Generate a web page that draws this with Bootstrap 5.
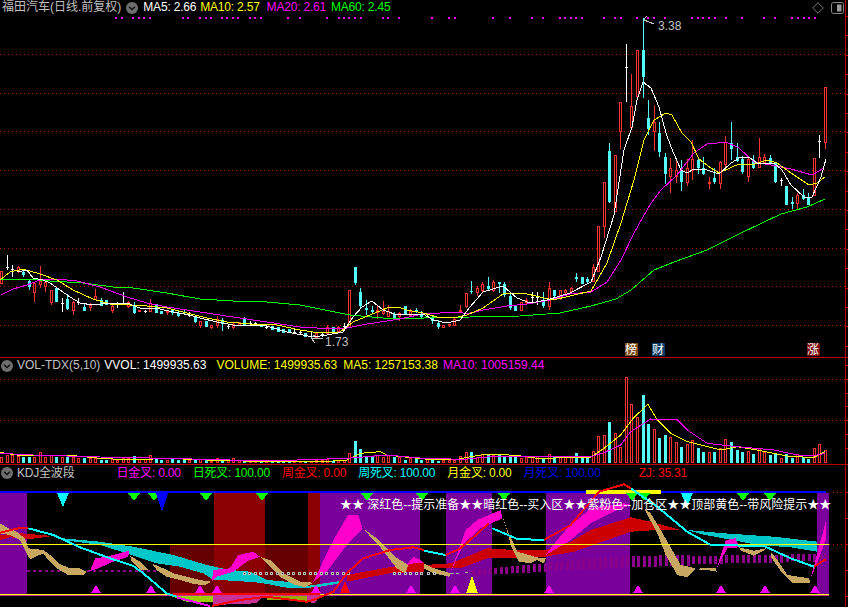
<!DOCTYPE html>
<html lang="zh">
<head>
<meta charset="utf-8">
<title>福田汽车</title>
<link href="https://cdn.jsdelivr.net/npm/bootstrap@5.3.0/dist/css/bootstrap.min.css" rel="stylesheet">
<style>
html,body{margin:0;height:100%;background:#000;overflow:hidden}
.term{width:848px;height:607px;background:#000;font:12px/15px "Liberation Sans","Noto Sans CJK SC",sans-serif}
.stack{width:845px}
.axis{width:3px;border-left:1px solid #c00000}
.axis svg{display:block}
.pane-a{height:358px;border-bottom:1px solid #c00000}
.pane-b{height:107px;border-bottom:1px solid #c00000}
.pane-c{height:142px}
.legend{height:15px;white-space:nowrap;padding-left:1px;letter-spacing:-.2px}
.pane-a .legend{padding-left:2px}
.pane-a .legend>span:first-child{letter-spacing:0}
.pane-b .legend{letter-spacing:0}
.pane-c .legend{height:16px}
.legend svg,.plot{display:block;flex:none}
.c-g{color:#c0c0c0}.c-w{color:#fff}.c-y{color:#ff0}.c-m{color:#f0f}.c-l{color:#0f0}.c-r{color:#f00}.c-c{color:#0ff}.c-b{color:#0000e6}
.gap-4{margin-left:4px}.gap-5{margin-left:5px}.gap-6{margin-left:6px}.gap-7{margin-left:7px}
.gap-10{margin-left:10px}.gap-12{margin-left:12px}
.gap-38{margin-left:38px}.gap-42{margin-left:42px}
.plot text{font:12px "Liberation Sans","Noto Sans CJK SC",sans-serif}
.plot{shape-rendering:crispEdges}
.tool{gap:7px;margin-right:1px}
</style>
</head>
<body>
<div class="term d-flex flex-row overflow-hidden">
  <div class="stack d-flex flex-column">
    <section class="pane-a d-flex flex-column">
      <div class="legend d-flex align-items-center">
        <span class="c-g">福田汽车(日线.前复权)</span>
        <svg class="gap-5" width="12" height="12" viewBox="0 0 12 12"><circle cx="6" cy="6" r="6" fill="#6e6e6e"/><path d="M3 4.8 6 7.6 9 4.8" fill="none" stroke="#111" stroke-width="1.4"/></svg>
        <span class="c-w gap-5">MA5: 2.66</span>
        <span class="c-y gap-4">MA10: 2.57</span>
        <span class="c-m gap-7">MA20: 2.61</span>
        <span class="c-l gap-5">MA60: 2.45</span>
        <span class="tool ms-auto d-flex align-items-center">
          <svg width="12" height="12" viewBox="0 0 12 12"><path d="M6 .7 11.3 6 6 11.3.7 6Z" fill="none" stroke="#777"/></svg>
          <svg width="13" height="12" viewBox="0 0 13 12"><rect x=".5" y=".5" width="12" height="11" rx="2" fill="none" stroke="#888"/><rect x="6" y="2.5" width="4.5" height="7" fill="#999"/></svg>
        </span>
      </div>
      <svg id="p1" class="plot" width="845" height="342" viewBox="0 15 845 342">
        <g id="p1g"></g>
        <g fill="#c0c0c0">
          <text x="658" y="30">3.38</text>
          <text x="325" y="346">1.73</text>
        </g>
        <path d="M644 20 654 24M644 19 647 16M644 19 647 22M311 338 323 339M311 338 315 335M311 338 315 343" stroke="#c0c0c0" fill="none"/>
        <rect x="625" y="343" width="13" height="13" fill="#7a4a18"/><text x="625" y="354" fill="#fff">榜</text>
        <rect x="652" y="343" width="13" height="13" fill="#0c3a66"/><text x="652" y="354" fill="#fff">财</text>
        <rect x="807" y="343" width="13" height="13" fill="#7a0c0c"/><text x="807" y="354" fill="#fff">涨</text>
      </svg>
    </section>
    <section class="pane-b d-flex flex-column">
      <div class="legend d-flex align-items-center">
        <svg width="12" height="12" viewBox="0 0 12 12"><circle cx="6" cy="6" r="6" fill="#6e6e6e"/><path d="M3 4.8 6 7.6 9 4.8" fill="none" stroke="#111" stroke-width="1.4"/></svg>
        <span class="c-g gap-4">VOL-TDX(5,10)</span>
        <span class="c-w gap-4">VVOL: 1499935.63</span>
        <span class="c-y gap-10">VOLUME: 1499935.63</span>
        <span class="c-y gap-6">MA5: 1257153.38</span>
        <span class="c-m gap-5">MA10: 1005159.44</span>
      </div>
      <svg id="p2" class="plot" width="845" height="91" viewBox="0 373 845 91"></svg>
    </section>
    <section class="pane-c d-flex flex-column">
      <div class="legend d-flex align-items-center">
        <svg width="12" height="12" viewBox="0 0 12 12"><circle cx="6" cy="6" r="6" fill="#6e6e6e"/><path d="M3 4.8 6 7.6 9 4.8" fill="none" stroke="#111" stroke-width="1.4"/></svg>
        <span class="c-g gap-4">KDJ全波段</span>
        <span class="c-m gap-42">日金叉: 0.00</span>
        <span class="c-l gap-12">日死叉: 100.00</span>
        <span class="c-r gap-12">周金叉: 0.00</span>
        <span class="c-c gap-12">周死叉: 100.00</span>
        <span class="c-y gap-12">月金叉: 0.00</span>
        <span class="c-b gap-12">月死叉: 100.00</span>
        <span class="c-r gap-38">ZJ: 35.31</span>
      </div>
      <svg id="p3" class="plot" width="845" height="126" viewBox="0 481 845 126"><g id="p3g"></g>
        <text x="340" y="509" fill="#fff" xml:space="preserve">★★ 深红色--提示准备★★暗红色--买入区★★紫粉色--加仓区★★顶部黄色--带风险提示★★</text>
      </svg>
    </section>
  </div>
  <div class="axis"><svg id="ax" width="2" height="607" viewBox="0 0 2 607"></svg></div>
</div>
<script>
/* Chart data in pixel units of each pane: [kind, bodyTop, bodyBottom, high, low] from newest to oldest */
var C=`r87,143,87,149 w135,158,141 r158,196,158,196 c197,205,193,205 c195,199,189,200 r195,204,193,209 c202,204,197,209 c186,205,186,205 w178,186,180 c163,182,163,183 c158,163,155,163 r157,163,154,163 r157,168,138,168 c160,168,155,169 r159,177,157,182 c159,172,156,174 c157,161,143,162 c143,149,122,160 r142,165,136,167 r162,184,161,189 c178,182,168,184 r182,184,177,189 c168,174,157,175 c160,168,157,174 r159,171,140,180 r168,183,159,186 c171,182,160,191 r170,177,158,183 r168,177,158,193 c157,174,153,184 c133,152,122,157 r122,132,105,151 c118,129,100,135 c50,77,18,98 r50,97,50,97 r106,128,74,128 w44,102,67 r102,132,102,149 r155,212,155,212 c151,202,143,203 r182,227,182,238 r226,272,226,272 r267,282,264,282 c279,282,277,284 c277,284,277,284 c277,279,273,282 r288,292,287,293 r290,293,289,295 r290,298,290,300 c290,296,290,298 r288,307,282,310 c300,306,292,308 w292,305,297 w292,302,297 r300,303,298,305 r302,311,302,311 c305,311,305,311 c296,308,293,310 c284,295,282,297 c282,284,282,293 r282,291,280,292 c286,289,277,290 r284,291,282,292 r288,293,286,296 c291,292,281,294 r293,307,293,308 r310,312,305,313 r319,326,317,326 r324,326,324,327 r325,328,325,328 c323,327,320,329 c318,321,316,324 w313,318,316 c314,317,311,319 c310,312,308,313 r311,316,309,317 c306,315,306,315 r313,317,312,321 c314,319,312,319 r311,317,305,317 r311,314,301,315 r310,313,305,319 c310,312,306,313 c308,310,300,315 c292,306,288,308 c267,283,267,285 r290,328,290,328 w323,329,326 r327,332,326,332 c327,333,327,333 r327,334,325,334 w332,337,334 r333,338,333,338 w332,338,336 c333,337,333,337 w330,335,332 w329,334,332 c329,333,329,333 c329,333,329,333 c327,332,327,332 c326,330,326,330 w325,329,327 c324,327,324,327 w322,325,323 w321,325,323 c318,325,317,325 r322,326,322,326 r324,328,323,329 w324,329,326 c320,324,318,331 r319,326,316,328 r325,328,325,329 c321,327,321,327 r321,326,321,328 c316,322,316,323 w312,317,315 c312,313,310,314 c313,316,311,317 c309,313,309,315 r311,313,310,315 c311,314,311,314 c304,313,304,313 r303,312,299,312 w310,313,311 r310,312,310,312 c305,313,302,314 r302,307,301,308 w292,305,303 w302,308,304 r306,311,305,313 c300,305,300,305 c300,306,298,306 r296,300,289,300 r305,308,303,311 c307,311,303,311 w298,305,302 r302,311,301,315 c299,309,294,310 w298,312,303 c288,302,288,302 r290,303,290,305 r282,287,281,292 r281,285,266,288 r283,293,282,302 c281,287,280,290 c272,275,269,277 r267,272,266,273 w265,277,269 w255,270,267 r271,284,271,284`.split(' ');
var VR=[330,312,323,356,352,342,353,343,355,340,345,335,323,342,333,337,330,305,297,325,335,337,335,323,300,312,320,305,290,285,293,268,252,165,230,192,112,320,280,245,285,288,333,352,352,338,352,352,352,347,342,355,349,352,352,353,346,347,347,346,345,342,342,350,337,337,348,360,360,360,362,358,358];
var VL=[307,300,300,303,307,305,305,292,305,300,305,307,307,307,308,310,310,310,314,314,313,315,310,310,303,312,312,300,308,315,316,311,315,316,316,316,313,315,317,310,312,313,310,314,314,316,316,318,318,318,318,318,318,316,318,320,318,316,316,313,318,316,316,295,258,282,305,306,300,305,300,305,305,316,310,312,315];
var STEP=5.53;
function h(y){return '<path d="M0 '+(y+.5)+'H845" stroke="#a80000" stroke-dasharray="1 3"/>'}
function poly(p,c,w){return '<polyline points="'+p+'" fill="none" stroke="'+c+'" stroke-width="'+(w||1)+'"/>'}
/* ------- main pane ------- */
var s='';[54,93,131,170,209,248,286,325].forEach(y=>s+=h(y));
var dots1=[348,365,400,417,433,450,550,565,600,617,632,665,682,698,715,750,765,782,865,900,982,1017,1032,1048,1065,1082,1148,1165,1197];
var dots2=[25,75,92,207,258,323,357,408,423,440,456,473,540,573,590,640,673,690,723,805,821,838,855,872,906,954,1020,1052,1104,1122,1140,1156,1172];
dots1.forEach(d=>s+='<rect x="'+Math.round(d/3-1)+'" y="17" width="2" height="2" fill="#f0f"/>');
dots2.forEach(d=>s+='<rect x="'+Math.round(424+d/3-1)+'" y="17" width="2" height="2" fill="#f0f"/>');
C.forEach(function(d,k){
  var t=d[0],v=d.slice(1).split(',').map(Number),x=Math.round(825-STEP*k),m=x+.5;
  if(t=='w'){s+='<path d="M'+m+' '+v[0]+'V'+v[1]+'M'+(x-1)+' '+(v[2]+.5)+'H'+(x+2)+'" stroke="#fff"/>';return}
  var col=t=='r'?'#ff3232':'#54fcfc';
  if(v[2]<v[0]||v[3]>v[1])s+='<path d="M'+m+' '+v[2]+'V'+v[0]+'M'+m+' '+v[1]+'V'+v[3]+'" stroke="'+col+'"/>';
  if(t=='r')s+='<rect x="'+(x-.5)+'" y="'+(v[0]+.5)+'" width="2" height="'+Math.max(v[1]-v[0]-1,1)+'" fill="#000" stroke="'+col+'"/>';
  else s+='<rect x="'+(x-1)+'" y="'+v[0]+'" width="3" height="'+Math.max(v[1]-v[0],1)+'" fill="'+col+'"/>';
});
s+=poly('0,280 27,279 50,281 83,283 113,287 133,288 167,293 200,299 233,301 267,302 300,305 320,309 350,315 383,318 424,318 470,317 520,316 560,313 591,306 616,299 631,290 654,270 674,262 707,250 741,233 781,214 807,207 825,199','#0f0');
s+=poly('1,295 13,289 27,285 40,280 57,279 77,281 100,287 127,297 147,303 167,307 200,312 233,317 267,322 300,327 333,329 347,328 367,324 400,319 427,313 440,313 460,312 466,314 483,310 507,306 527,304 550,300 570,294 591,292 607,282 621,260 634,233 651,203 661,190 677,175 694,153 707,144 717,143 726,142 739,148 754,162 771,165 791,169 812,175 824,168','#f0f');
s+=poly('0,280 10,272 23,269 40,274 57,280 73,290 93,299 110,304 130,305 147,306 167,308 187,313 207,318 227,322 250,324 277,325 300,330 320,333 340,332 353,322 370,315 387,308 398,307 407,310 423,313 437,317 453,318 467,315 483,308 503,294 523,293 540,297 553,300 570,296 591,291 607,263 621,223 634,180 644,140 654,120 666,113 672,115 682,133 691,142 699,159 711,168 719,173 732,167 739,164 752,165 767,160 777,163 791,173 809,185 817,183 825,177','#ff0');
s+=poly('17,272 27,270 33,278 43,280 50,283 60,290 70,297 80,303 93,305 110,303 127,303 140,308 160,309 173,312 190,315 200,318 217,322 233,325 267,326 287,332 313,337 327,335 343,332 353,317 362,307 372,301 383,310 397,315 423,314 433,320 447,323 460,320 470,307 483,292 503,286 517,298 530,303 547,300 570,293 591,282 601,257 614,215 624,150 632,127 637,100 643,82 651,88 659,107 666,133 671,147 681,170 687,173 694,169 704,169 719,174 731,163 741,157 749,157 757,163 774,163 782,170 791,185 804,197 812,197 821,177 826,159','#fff');
document.getElementById('p1g').innerHTML=s;
/* ------- volume pane ------- */
s=h(379)+h(420);
var vc=k=>C[k]&&C[k][0]=='c';
function vb(x,y,k){
  return !vc(k)?'<rect x="'+(x-.5)+'" y="'+(y+.5)+'" width="2" height="'+(462-y)+'" fill="#000" stroke="#ff3232"/>':'<rect x="'+(x-1)+'" y="'+y+'" width="3" height="'+(463-y)+'" fill="#54fcfc"/>';
}
VR.forEach((Y,k)=>{var x=Math.round(825-STEP*k),y=Math.round(340+Y/3);s+=vb(x,y,k)});
VL.forEach((Y,i)=>{var k=149-i,x=Math.round(825-STEP*k),y=Math.round(355+Y/3);s+=vb(x,y,k)});
function Lv(a){return a.map(p=>(p[0]/3)+','+(355+p[1]/3)).join(' ')}
function Rv(a){return a.map(p=>(424+p[0]/3)+','+(340+p[1]/3)).join(' ')}
s+=poly(Lv([[0,292],[50,300],[200,300],[300,310],[400,315],[500,310],[620,315],[800,320],[1000,318],[1040,315],[1080,295],[1140,290],[1160,300],[1272,312]])+' '+Rv([[100,358],[130,352],[170,345],[230,343],[290,348],[340,355],[500,352],[540,325],[590,285],[630,232],[672,193],[700,240],[740,280],[790,305],[850,320],[890,330],[940,320],[1000,330],[1050,340],[1100,350],[1170,352],[1202,335]]),'#ff0');
s+=poly(Lv([[0,295],[100,300],[300,306],[500,310],[800,318],[1040,310],[1160,300],[1272,310]])+' '+Rv([[120,358],[200,350],[300,350],[500,350],[540,338],[590,315],[620,275],[680,237],[760,240],[790,270],[850,310],[940,320],[1050,330],[1130,347],[1170,347],[1202,340]]),'#f0f');
document.getElementById('p2').innerHTML=s;
/* ------- KDJ pane ------- */
function Lp(t){return t.trim().split(/\s+/).map(p=>{p=p.split(',');return (p[0]/3).toFixed(1)+','+(460+p[1]/3).toFixed(1)}).join(' ')}
function Rp(t){return t.trim().split(/\s+/).map(p=>{p=p.split(',');return (424+p[0]/3).toFixed(1)+','+(460+p[1]/3).toFixed(1)}).join(' ')}
function pg(p,c){return '<polygon points="'+p+'" fill="'+c+'"/>'}
function r(x,y,w,hh,c){return '<rect x="'+x+'" y="'+y+'" width="'+w+'" height="'+hh+'" fill="'+c+'"/>'}
s='';
var PUR='#7a009c',DR='#8b0000',DD='#660000';
s+=r(0,493,27,101,PUR)+r(320,493,100,101,PUR)+r(446,493,46,101,PUR)+r(546,493,84,101,PUR)+r(817,493,12,101,PUR);
s+=r(170,544,44,50,DD)+r(214,493,51,101,DR)+r(265,544,43,50,DD)+r(308,493,12,101,DR);
s+='<path d="M829 492.5H845M829 544.5H845" stroke="#a80000" stroke-dasharray="1 3"/>';
/* histogram + markers */
s+='<path d="M27 570.5H170" stroke="#8b008b" stroke-width="2" stroke-dasharray="3 3"/>';
for(var k=0;k<65;k++){var X=1204-16.5*k;if(X<130)break;var t=X>800?282+(1204-X)*0.015:285+(800-X)*0.0145+(X<620?(620-X)*.08-3:0),b=X>800?305+(X<1150?(1150-X)*.02:0):318+(800-X)*.02+(X<620?(620-X)*.03:0);s+=r(Math.round(424+X/3-1),Math.round(460+t/3),3,Math.max(1,Math.round((b-t)/3)),'#8b008b')}
/* ribbons */
var teal='#00c8c8',red='#cc0000',tan='#c8a860',pink='#ff00cc';
s+=pg(Lp('190,235 300,245 400,260 520,285 620,315 690,330 750,335 800,360 860,365 920,378 1020,363 1020,370 950,382 870,385 780,368 700,362 640,360 610,340 540,320 470,310 380,280 300,255 190,240'),teal);
s+=pg(Rp('790,210 900,220 1050,230 1180,245 1180,275 1100,262 1000,255 950,245 830,222'),teal);
s+=pg(Lp('0,225 60,220 160,228 90,237 30,232 0,240'),red);
s+=pg(Lp('1040,345 1150,325 1272,305 1272,335 1170,340 1040,365'),red);
s+=pg(Rp('0,315 80,310 190,265 270,270 365,270 440,245 500,210 620,172 680,185 770,210 700,210 620,215 550,240 450,275 365,290 270,295 190,295 110,325 0,325'),red);
[ '0,190 25,205 50,215 75,235 85,265 130,270 150,285 175,310 210,325 240,325 260,335 250,345 205,345 170,325 145,300 130,280 90,298 80,280 60,240 30,225 0,220',
  '390,287 420,305 445,330 420,330 395,305',
  '455,310 490,325 520,340 600,360 635,365 615,375 585,373 540,360 500,350 470,330',
  '780,290 810,300 850,340 900,365 940,368 915,382 880,373 840,350 800,310',
  '1088,205 1130,235 1185,290 1225,315 1215,340 1190,325 1140,260'].forEach(p=>s+=pg(Lp(p),tan));
[ '270,333 285,295 320,290 388,272 385,290 340,305 295,325','635,365 640,330 690,325 715,285 760,275 780,290 745,302 700,335 650,350',
  '940,365 1000,240 1045,165 1075,165 1088,205 1040,255 980,335','1220,315 1240,290 1262,300 1272,310 1240,310'].forEach(p=>s+=pg(Lp(p),pink));
[ '0,310 30,325 80,340 75,350 30,340 0,325','235,172 250,210 280,275 350,295 365,295 360,310 340,300 320,310 285,305 262,260 240,180',
  '660,145 680,160 710,210 770,315 815,325 790,352 760,345 725,285 700,220','830,325 875,325 878,335 850,330 815,328',
  '945,262 990,272 1025,265 1020,272 990,287 950,272','1040,275 1060,300 1090,345 1155,355 1160,370 1105,370 1075,340 1040,290'].forEach(p=>s+=pg(Rp(p),tan));
[ '80,335 125,210 160,180 230,150 235,175 170,205 120,250','365,285 400,240 430,205 500,145 600,130 620,135 580,150 500,190 440,240',
  '878,325 905,240 935,235 945,262 910,265','1160,355 1205,185 1205,240 1175,320'].forEach(p=>s+=pg(Rp(p),pink));
/* base band */
s+=pg(Lp('505,405 640,408 640,425 560,425'),'#9acd00')+pg(Lp('640,405 790,408 770,430 640,435'),'#c83296')+pg(Lp('800,408 920,408 920,422 800,420'),'#9aa800')+pg(Lp('920,405 960,405 945,430 920,425'),'#c83296');
/* guide lines */
s+=r(0,491,826,2,'#0000ff')+r(586,490,75,4,'#ff0');
s+=r(0,544,829,1,'#ff0')+r(0,594,829,1,'#ff0')+r(0,595,829,1,'#c83296');
/* small marks */
for(var X=730;X<1060;X+=16.5)s+='<rect x="'+Math.round(X/3-.5)+'.5" y="572.5" width="2" height="2" fill="#000" stroke="#bbb"/>';
for(var X=1180;X<1270;X+=16.5)s+='<rect x="'+Math.round(X/3-.5)+'.5" y="572.5" width="2" height="2" fill="#000" stroke="#bbb"/>';
[10,27].forEach(X=>s+='<rect x="'+Math.round(424+X/3-.5)+'.5" y="572.5" width="2" height="2" fill="#000" stroke="#bbb"/>');
s+=r(451,573,3,1,'#aaa')+r(456,573,3,1,'#aaa')+r(465,572,3,1,'#aaa');
/* up triangles */
function up(x,c,ht,w){return pg((x-w)+',593 '+x+','+(593-ht)+' '+(x+w)+',593',c)}
[288,453,601,651,948,1233].forEach(X=>s+=up(Math.round(X/3),'#f0f',8,5));
s+=up(345,'#f00',12,5);
[92,375,641,890,1022,1172].forEach(X=>s+=up(Math.round(424+X/3),'#f0f',8,5));
s+=up(472,'#ff0',17,6);
/* down triangles */
function dn(x,c,ht,w){return pg((x-w)+',493 '+x+','+(493+ht)+' '+(x+w)+',493',c)}
[402,463,618,786,1100,1265].forEach(X=>s+=dn(Math.round(X/3),'#0f0',8,6));
[240,625,660,957,1037].forEach(X=>s+=dn(Math.round(424+X/3),'#0f0',8,6));
s+=dn(63,'#0ff',14,6)+dn(162,'#0000ff',19,6)+dn(687,'#0ff',14,6);
/* long lines */
var LW=2;
s+=poly(Lp('0,218 55,205 85,205'),'#f00',LW);
s+=poly(Lp('85,205 160,225 240,262 330,295 400,318 430,340 500,400 530,410'),'#0ff',LW);
s+=poly(Lp('530,412 630,438'),'#f0f',LW);
s+=poly(Lp('520,403 960,403'),'#f00',LW);
s+=poly(Lp('635,438 720,420 800,410 920,425 940,420 1000,395 1040,340 1090,295 1170,270 1240,262 1272,270'),'#f00',LW);
s+=poly(Rp('0,272 65,285'),'#0ff',LW);
s+=poly(Rp('65,285 110,265 195,190'),'#f00',LW);
s+=poly(Rp('205,205 280,237 360,240'),'#0ff',LW);
s+=poly(Rp('360,240 440,195 525,95 600,73 620,85'),'#f00',LW);
s+=poly(Rp('620,85 700,140 790,215 860,255 1020,258 1100,295 1170,320'),'#0ff',LW);
s+=poly(Rp('1170,320 1205,298'),'#f00',LW);
document.getElementById('p3g').innerHTML=s;
/* ------- right axis ticks ------- */
s='';
for(var y=16;y<357;y+=19.4)s+='<rect x="0" y="'+Math.round(y)+'" width="2" height="1" fill="#c00000"/>';
[365,379,393,406,420,434,448].forEach(y=>s+='<rect x="0" y="'+y+'" width="2" height="1" fill="#c00000"/>');
[492,518,544,570,596].forEach(y=>s+='<rect x="0" y="'+y+'" width="2" height="1" fill="#c00000"/>');
s+='<rect x="0" y="357" width="2" height="1" fill="#c00000"/><rect x="0" y="464" width="2" height="1" fill="#c00000"/>';
document.getElementById('ax').innerHTML=s;
</script>
<script src="https://cdn.jsdelivr.net/npm/bootstrap@5.3.0/dist/js/bootstrap.bundle.min.js"></script>
</body>
</html>
